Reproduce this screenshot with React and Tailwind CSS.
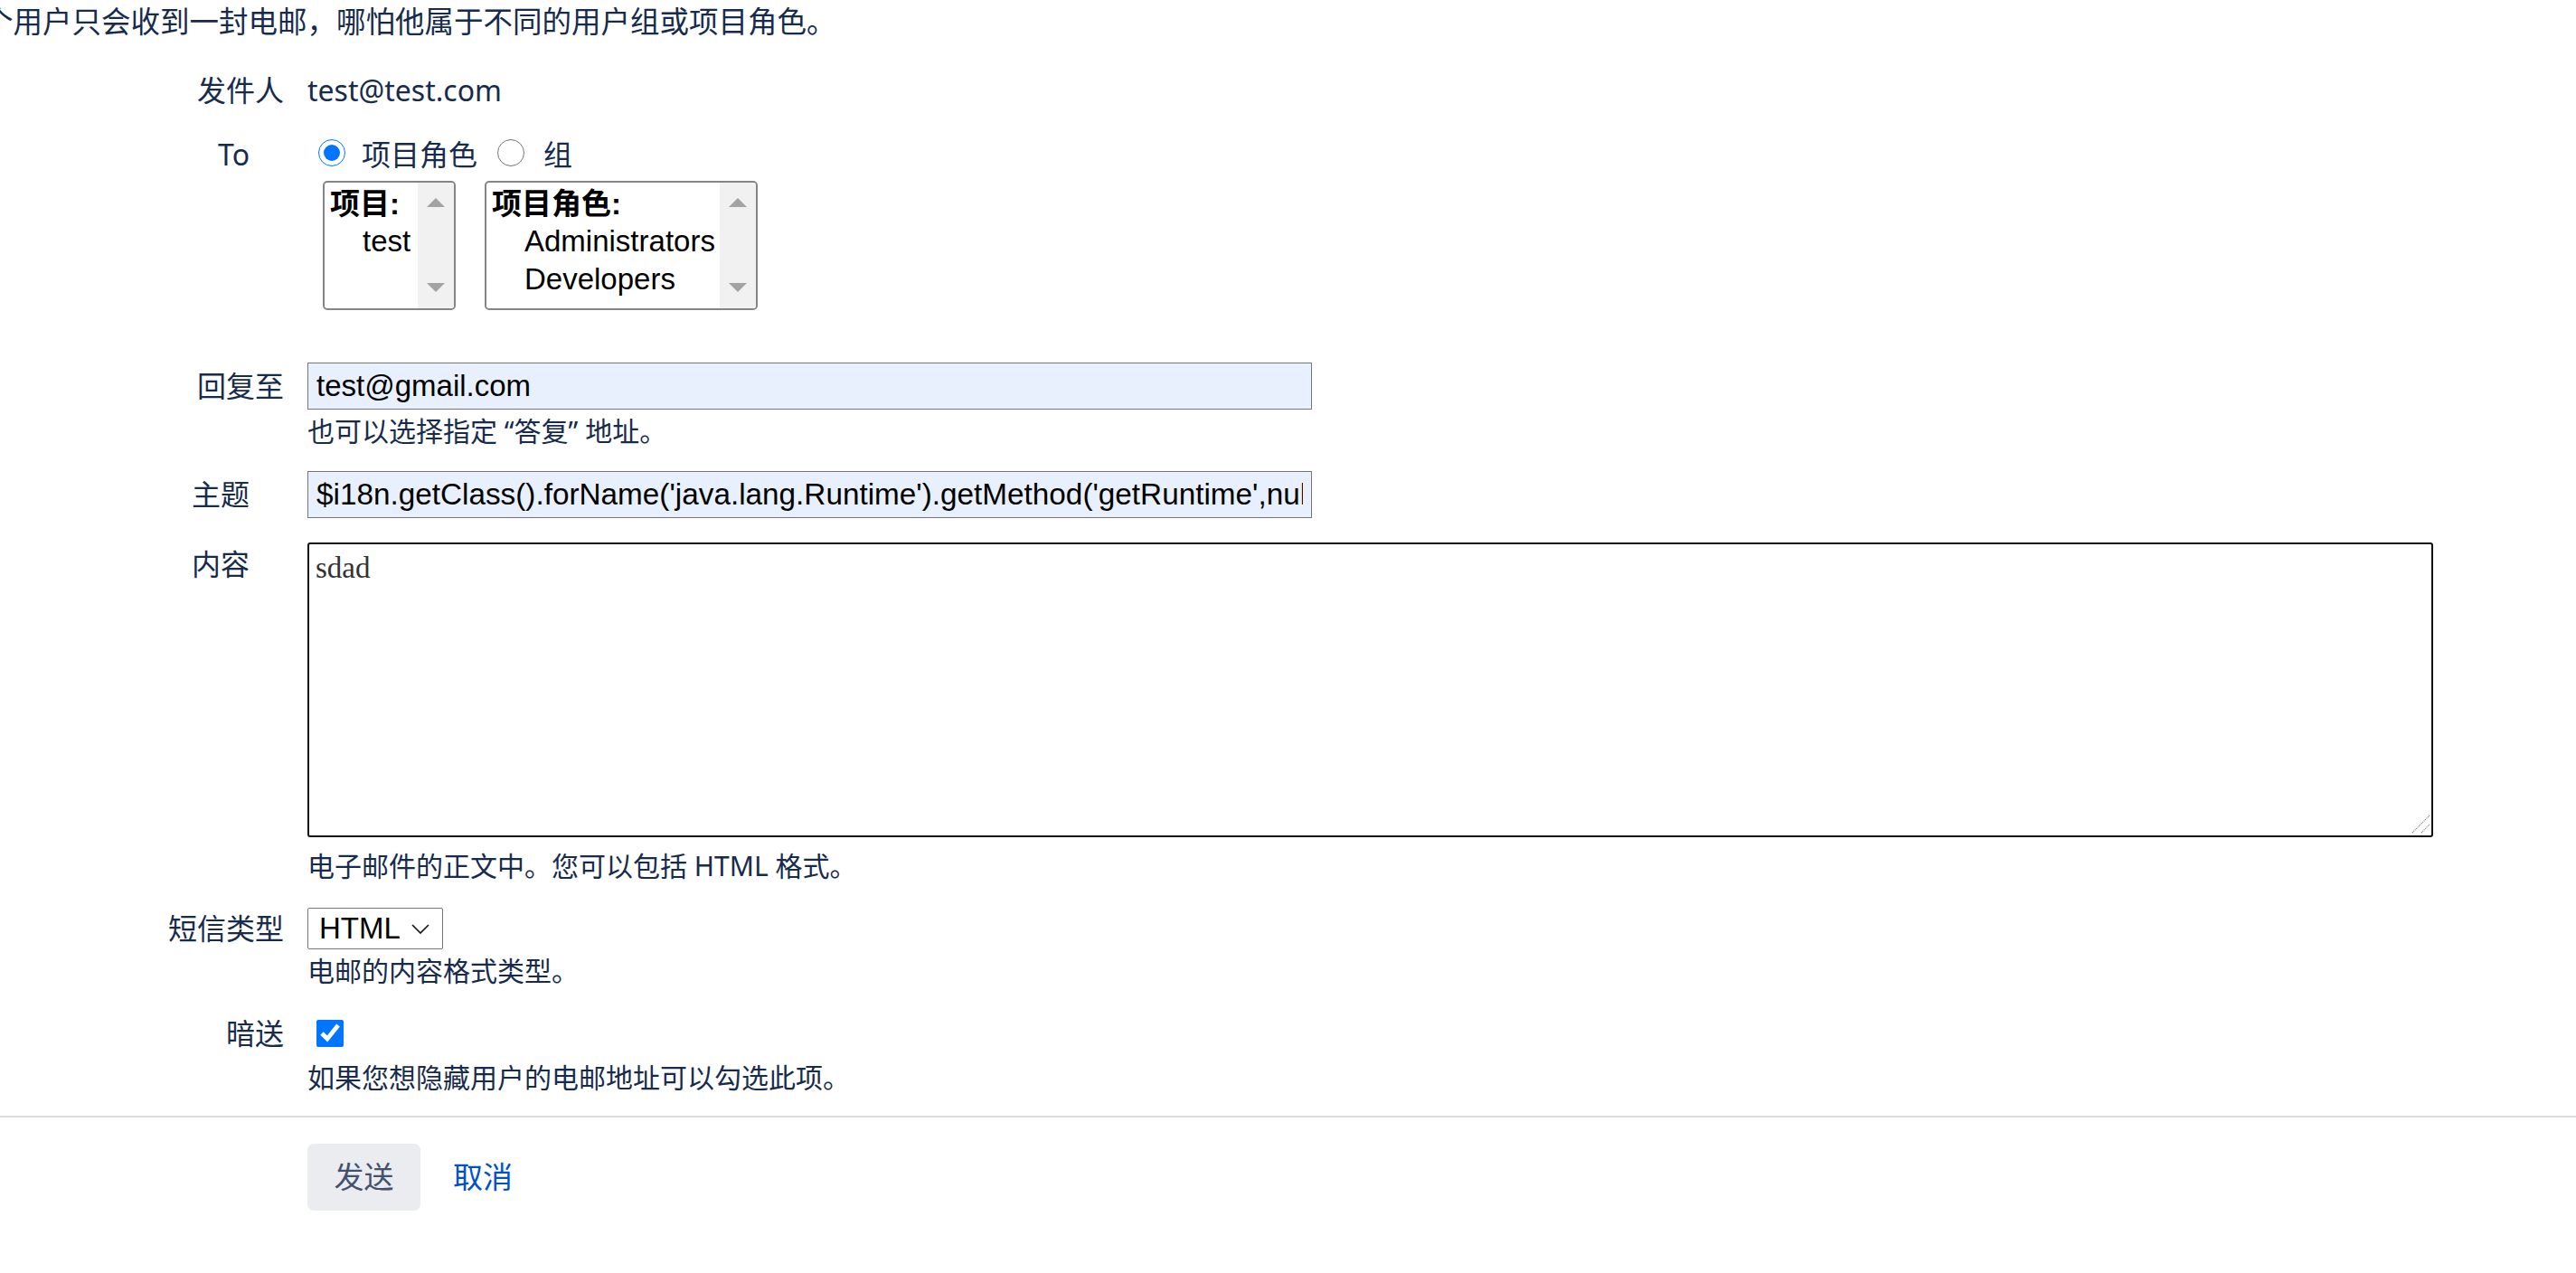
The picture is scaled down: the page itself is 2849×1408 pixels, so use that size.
import React from "react";

const baseFont = "font-['Noto_Sans','Noto_Sans_CJK_SC',sans-serif]";
const controlFont = "font-['Liberation_Sans','Noto_Sans_CJK_SC',sans-serif]";

const Row = ({ label, required, labelLeading = "leading-[46px]", className = "", children }) => (
  <div className={`flex items-start ${className}`}>
    <div className={`w-[314px] shrink-0 flex justify-end text-[32px] ${labelLeading}`}>
      <span>{label}</span>
      {required && <span className="w-[38px]" />}
    </div>
    <div className="ml-[26px] flex-1 min-w-0">{children}</div>
  </div>
);

const Help = ({ children, className = "" }) => (
  <div className={`text-[30px] leading-[38px] whitespace-nowrap ${className}`}>{children}</div>
);

const ListBox = ({ width, group, options }) => (
  <div className={`${width} h-[143px] flex border-2 border-[#858585] rounded-[5px] overflow-hidden bg-white`}>
    <div className={`flex-1 min-w-0 pt-[3px] pl-[6px] text-black text-[33px] ${controlFont}`}>
      <div className="h-[41px] leading-[41px] font-bold whitespace-nowrap">{group}</div>
      {options.map((o) => (
        <div key={o} className="h-[42px] leading-[42px] pl-[36px] whitespace-nowrap">
          {o}
        </div>
      ))}
    </div>
    <div className="w-[40px] shrink-0 bg-[#f1f1f1] flex flex-col items-center justify-between pt-[17px] pb-[18px]">
      <svg width="20" height="10" viewBox="0 0 20 10">
        <polygon points="0,10 10,0 20,10" fill="#a3a3a3" />
      </svg>
      <svg width="20" height="10" viewBox="0 0 20 10">
        <polygon points="0,0 20,0 10,10" fill="#a3a3a3" />
      </svg>
    </div>
  </div>
);

export default function App() {
  return (
    <div className={`min-h-screen w-full overflow-hidden bg-white text-[#172b4d] ${baseFont}`}>
      <p className="-ml-[18px] pt-[1px] whitespace-nowrap text-[32.5px] leading-[46px]">
        个用户只会收到一封电邮，哪怕他属于不同的用户组或项目角色。
      </p>

      <Row label="发件人" className="mt-[30px]">
        <div className="text-[32px] leading-[46px]">test@test.com</div>
      </Row>

      <Row label="To" required className="mt-[25px]">
        <div className="flex items-center h-[46px] text-[32px]">
          <input
            type="radio"
            name="to"
            defaultChecked
            className="m-0 ml-[12px] -mt-[5px] w-[30px] h-[30px] accent-[#0075ff]"
          />
          <span className="ml-[18px]">项目角色</span>
          <input type="radio" name="to" className="m-0 ml-[22px] -mt-[5px] w-[30px] h-[30px]" />
          <span className="ml-[21px]">组</span>
        </div>
        <div className="mt-[6px] ml-[17px] flex gap-[32px]">
          <ListBox width="w-[147px]" group="项目:" options={["test"]} />
          <ListBox width="w-[302px]" group="项目角色:" options={["Administrators", "Developers"]} />
        </div>
      </Row>

      <Row label="回复至" labelLeading="leading-[52px]" className="mt-[58px]">
        <input
          readOnly
          defaultValue="test@gmail.com"
          className={`block w-[1111px] h-[52px] border border-[#767676] bg-[#e8f0fe] px-[9px] text-[33px] text-black outline-none ${controlFont}`}
        />
        <Help className="mt-[5px]">也可以选择指定 “答复” 地址。</Help>
      </Row>

      <Row label="主题" required labelLeading="leading-[52px]" className="mt-[25px]">
        <input
          readOnly
          defaultValue="$i18n.getClass().forName('java.lang.Runtime').getMethod('getRuntime',null).invoke(null,null)"
          className={`block w-[1111px] h-[52px] border border-[#767676] bg-[#e8f0fe] px-[9px] text-[33.3px] text-black outline-none ${controlFont}`}
        />
      </Row>

      <Row label="内容" required labelLeading="leading-[48px]" className="mt-[27px]">
        <div className="relative w-[2351px]">
          <textarea
            readOnly
            defaultValue="sdad"
            className="block w-[2351px] h-[326px] border-2 border-[#111] rounded-[3px] px-[7px] py-[6px] resize-none outline-none text-[33px] leading-[40px] text-[#333] font-['Liberation_Serif','Noto_Sans_CJK_SC',serif]"
          />
          <svg className="absolute right-[3px] bottom-[4px]" width="22" height="22" viewBox="0 0 22 22">
            <line x1="2" y1="21" x2="21" y2="2" stroke="#777" strokeWidth="1.2" strokeDasharray="1 1" />
            <line x1="12" y1="21" x2="21" y2="12" stroke="#777" strokeWidth="1.2" strokeDasharray="1 1" />
          </svg>
        </div>
        <Help className="mt-[13px]">电子邮件的正文中。您可以包括 HTML 格式。</Help>
      </Row>

      <Row label="短信类型" className="mt-[27px]">
        <div
          className={`flex items-center w-[150px] h-[46px] border border-[#767676] rounded-[2px] pl-[12px] pr-[14px] text-[33px] text-black bg-white ${controlFont}`}
        >
          <span>HTML</span>
          <svg className="ml-auto" width="20" height="11" viewBox="0 0 20 11">
            <polyline points="1,1 10,10 19,1" fill="none" stroke="#111" strokeWidth="1.6" />
          </svg>
        </div>
        <Help className="mt-[5px]">电邮的内容格式类型。</Help>
      </Row>

      <Row label="暗送" className="mt-[27px]">
        <div className="flex items-center h-[46px]">
          <input type="checkbox" defaultChecked className="m-0 ml-[10px] w-[30px] h-[30px] accent-[#0075ff]" />
        </div>
        <Help className="mt-[7px]">如果您想隐藏用户的电邮地址可以勾选此项。</Help>
      </Row>

      <hr className="mt-[23px] border-0 border-t-2 border-[#dddddd]" />

      <div className="mt-[29px] pl-[340px] flex items-center">
        <button className="w-[125px] h-[74px] rounded-[7px] bg-[#ebecf0] text-[#42526e] text-[33px]">
          发送
        </button>
        <a className="ml-[36px] text-[#0052cc] text-[33px] cursor-pointer">取消</a>
      </div>
    </div>
  );
}
